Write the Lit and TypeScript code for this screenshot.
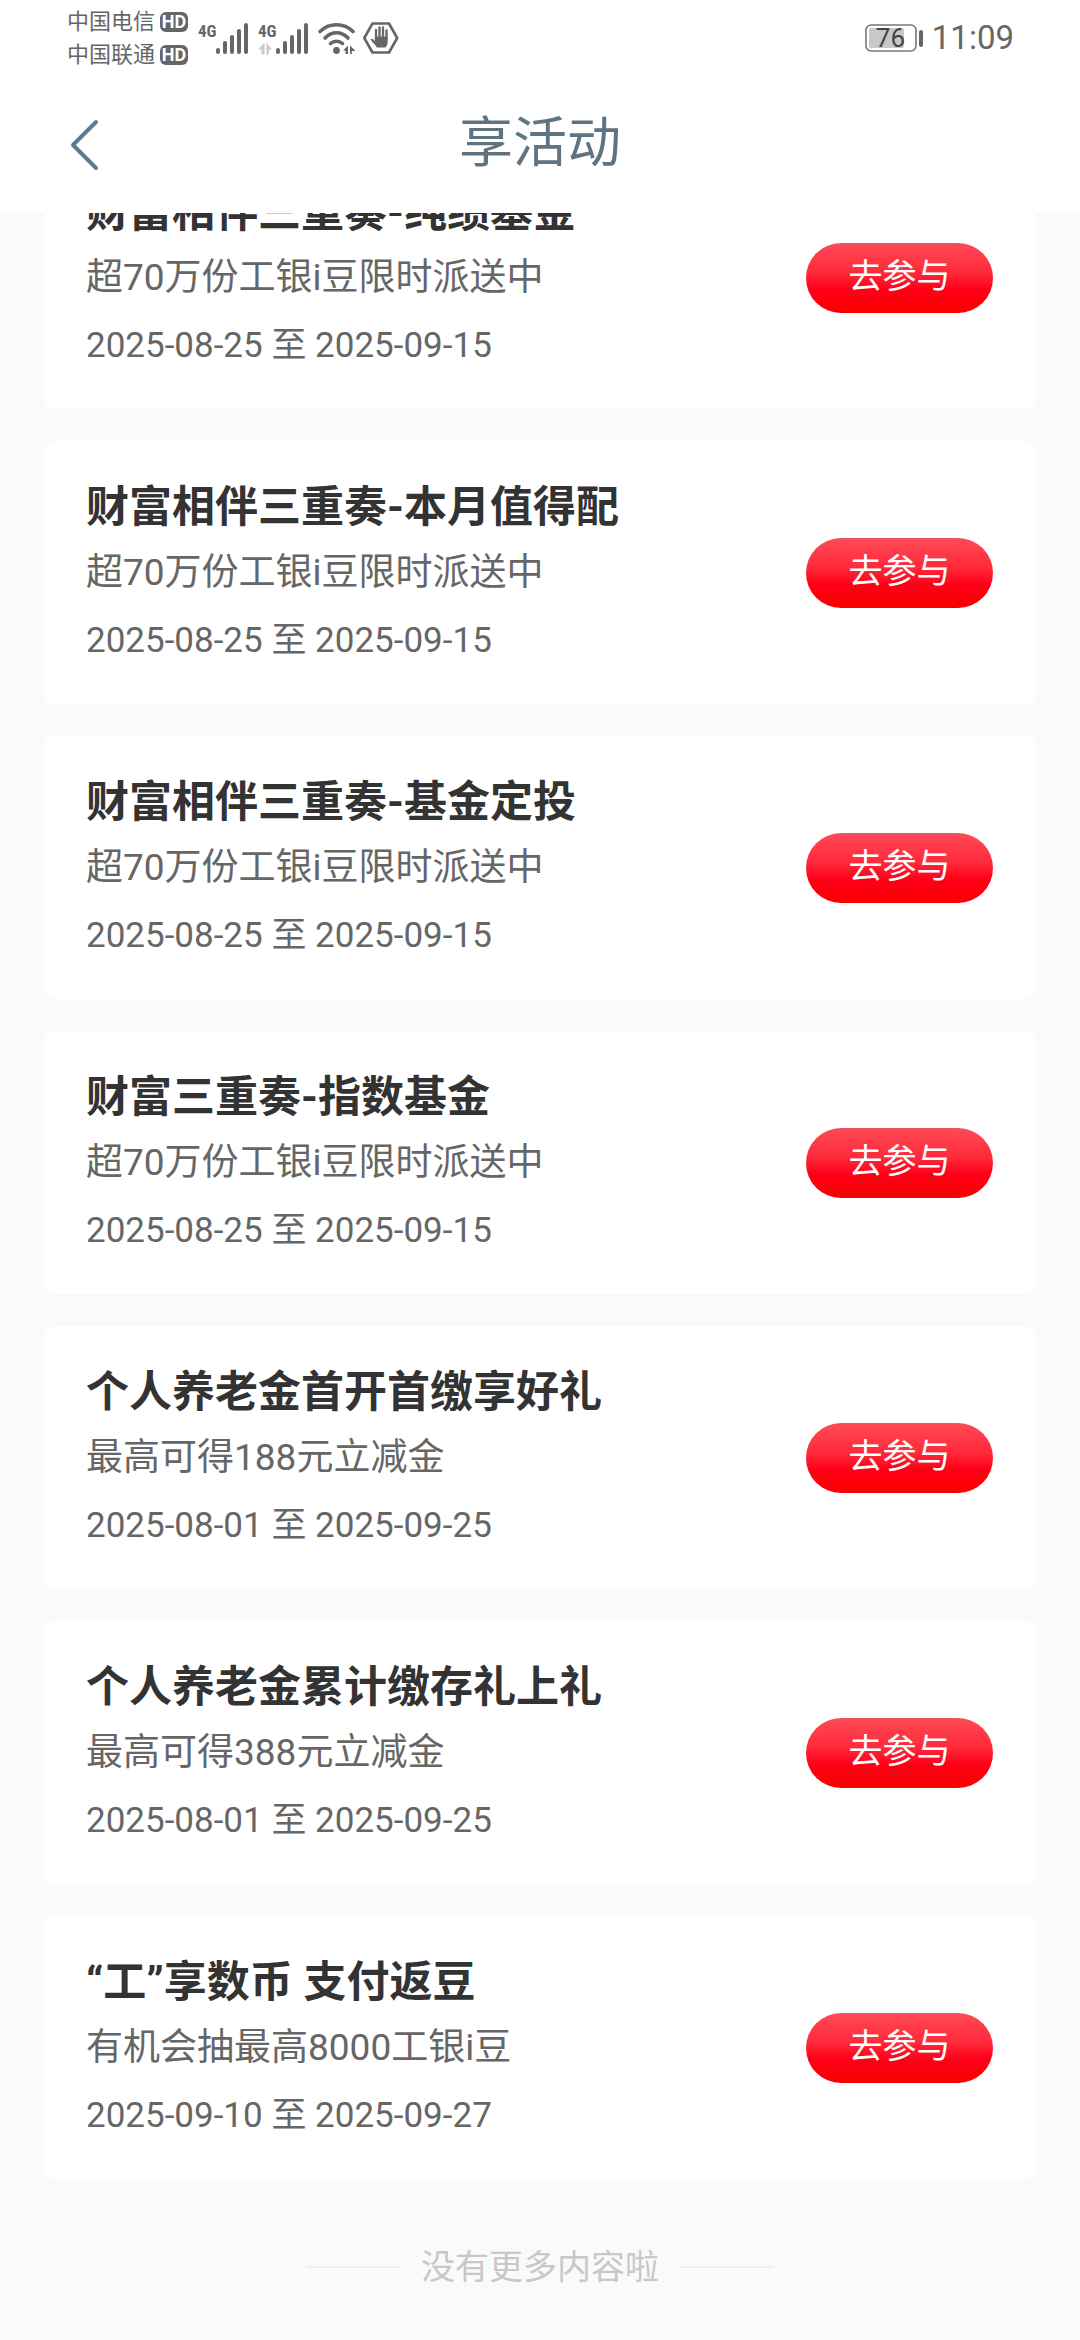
import { LitElement, html, css, svg } from "lit";
import { customElement, property } from "lit/decorators.js";

interface Activity {
  title: string;
  summary: string;
  from: string;
  to: string;
}

const ACTIVITIES: Activity[] = [
  { title: "财富相伴三重奏-纯绩基金", summary: "超70万份工银i豆限时派送中", from: "2025-08-25", to: "2025-09-15" },
  { title: "财富相伴三重奏-本月值得配", summary: "超70万份工银i豆限时派送中", from: "2025-08-25", to: "2025-09-15" },
  { title: "财富相伴三重奏-基金定投", summary: "超70万份工银i豆限时派送中", from: "2025-08-25", to: "2025-09-15" },
  { title: "财富三重奏-指数基金", summary: "超70万份工银i豆限时派送中", from: "2025-08-25", to: "2025-09-15" },
  { title: "个人养老金首开首缴享好礼", summary: "最高可得188元立减金", from: "2025-08-01", to: "2025-09-25" },
  { title: "个人养老金累计缴存礼上礼", summary: "最高可得388元立减金", from: "2025-08-01", to: "2025-09-25" },
  { title: "“工”享数币 支付返豆", summary: "有机会抽最高8000工银i豆", from: "2025-09-10", to: "2025-09-27" },
];

@customElement("status-bar")
class StatusBar extends LitElement {
  static styles = css`
    :host {
      display: flex;
      align-items: center;
      justify-content: space-between;
      height: 76px;
      padding: 0 66px 0 67px;
      color: #666;
    }
    .group {
      display: flex;
      align-items: center;
    }
    .carrier {
      display: flex;
      align-items: center;
      gap: 5px;
      height: 33px;
      font-size: 22px;
      line-height: 33px;
    }
    .hd {
      width: 28px;
      border-radius: 6px;
      background: #666;
      color: #fff;
      font-size: 18px;
      font-weight: 700;
      line-height: 20px;
      text-align: center;
    }
    svg {
      display: block;
      flex: none;
      overflow: visible;
    }
    .signals {
      gap: 7px;
      margin-left: 10px;
    }
    .net {
      font: 700 17px "Liberation Sans Narrow", "Roboto Condensed", Roboto, sans-serif;
      fill: #666;
    }
    .battery {
      display: grid;
      align-items: center;
    }
    .battery svg,
    .level {
      grid-area: 1 / 1;
    }
    .level {
      padding-left: 11px;
      color: #444;
      font-size: 26px;
      line-height: 40px;
    }
    .right {
      gap: 8px;
    }
    .time {
      font-size: 33px;
      line-height: 40px;
    }
  `;

  private signal(data: boolean) {
    return html`<svg width="53" height="34" viewBox="0 0 53 34" fill="#666" aria-hidden="true">
      <text class="net" x="0" y="16">4G</text>
      ${data
        ? svg`<path d="M6.500 21.500v12h-3v-5h-3.500zM8.500 21.500v12h2.500v-5h3z" fill="#ccc" />`
        : null}
      <rect x="18" y="27" width="4" height="6" rx="2" />
      <rect x="25" y="20" width="4" height="13" rx="2" />
      <rect x="32" y="14" width="4" height="19" rx="2" />
      <rect x="39" y="8" width="4" height="25" rx="2" />
      <rect x="46" y="2" width="4" height="31" rx="2" />
    </svg>`;
  }

  render() {
    return html`
      <div class="group">
        <div>
          <div class="carrier">中国电信<span class="hd">HD</span></div>
          <div class="carrier">中国联通<span class="hd">HD</span></div>
        </div>
        <div class="group signals">
          ${this.signal(false)} ${this.signal(true)}
          <svg width="38" height="34" viewBox="0 0 38 34" fill="none" aria-hidden="true">
            <g stroke="#666" stroke-width="3.600" stroke-linecap="round">
              <path d="M2 10.500C11 1.500 26 1.500 35 10.500" />
              <path d="M7 17C13.500 10 23.500 10 30 17" />
              <path d="M12.500 22.500C16 19.500 21 19.500 24.500 22.500" />
            </g>
            <circle cx="18.500" cy="29.500" r="3.400" fill="#666" />
            <path d="M30 24.500v8.500h-2.500v-3.500h-2.500zM32 24.500v8.500h1.800v-3h3.700z" fill="#666" />
          </svg>
          <svg width="36" height="34" viewBox="0 0 36 34" fill="none" aria-hidden="true">
            <path d="M9.500 2.500h16.500l8.200 14.500-8.200 14.500h-16.500l-8.200-14.500z" stroke="#666" stroke-width="2.600" stroke-linejoin="round" />
            <path d="M13 18v-9M16.500 17v-10.500M20 17v-10.500M23.500 18v-8.500" stroke="#666" stroke-width="2.300" stroke-linecap="round" />
            <path d="M11.900 15.500h12.800v6.500c0 2-1.500 3-2.200 4.500h-8.500c-1-2-5.500-6-6.500-8 .6-1.300 2-1 3 0l1.400 1.400z" fill="#666" />
          </svg>
        </div>
      </div>
      <div class="group right">
        <div class="battery">
          <svg width="59" height="30" viewBox="0 0 59 30" aria-hidden="true">
            <rect x="1" y="2" width="50" height="26" rx="5" fill="none" stroke="#777" stroke-width="1.600" />
            <rect x="4" y="5" width="35" height="20" rx="2" fill="#c8c8c8" />
            <rect x="54" y="7" width="4" height="17" rx="2" fill="#666" />
          </svg>
          <span class="level">76</span>
        </div>
        <span class="time">11:09</span>
      </div>
    `;
  }
}

@customElement("activity-card")
class ActivityCard extends LitElement {
  @property({ attribute: false }) activity!: Activity;

  static styles = css`
    :host {
      display: block;
    }
    .card {
      display: flex;
      align-items: center;
      justify-content: space-between;
      gap: 24px;
      padding: 0 43px 0 42px;
      border-radius: 12px;
      background: #fff;
    }
    .text {
      padding: 34px 0 29px;
    }
    h2,
    p {
      margin: 0;
    }
    .title {
      color: #333;
      font-size: 43px;
      font-weight: 700;
      line-height: 64px;
    }
    .summary,
    .dates {
      color: #666;
      font-size: 37px;
      line-height: 68px;
    }
    .dates {
      font-size: 35px;
    }
    .join {
      flex: none;
      width: 187px;
      height: 70px;
      padding: 0 0 4px;
      border: 0;
      border-radius: 35px;
      background: linear-gradient(#e85560 0, #ff4753 4%, #ff2a3b 42%, #ff0018 66%, #f80000 100%);
      color: #fff;
      font: inherit;
      font-size: 34px;
      line-height: 64px;
      cursor: pointer;
    }
  `;

  render() {
    const a = this.activity;
    return html`<article class="card">
      <div class="text">
        <h2 class="title">${a.title}</h2>
        <p class="summary">${a.summary}</p>
        <p class="dates">${a.from} 至 ${a.to}</p>
      </div>
      <button class="join" type="button">去参与</button>
    </article>`;
  }
}

@customElement("app-root")
class AppRoot extends LitElement {
  static styles = css`
    :host {
      display: block;
      min-height: 100vh;
      background: #fafafa;
      font-family: Roboto, "Noto Sans CJK SC", sans-serif;
    }
    .top {
      position: sticky;
      top: 0;
      z-index: 1;
      background: #fff;
    }
    .nav {
      display: grid;
      grid-template-columns: 120px 1fr 120px;
      align-items: center;
      height: 137px;
    }
    .back {
      display: flex;
      align-items: center;
      height: 100%;
      padding: 0 0 0 68px;
      border: 0;
      background: none;
      cursor: pointer;
    }
    .heading {
      margin: 0;
      padding-bottom: 2px;
      color: #5f7380;
      font-size: 54px;
      font-weight: 400;
      line-height: 80px;
      text-align: center;
    }
    .list {
      display: grid;
      gap: 32px;
      margin-top: -67px;
      padding: 0 44px;
    }
    .end {
      display: flex;
      align-items: center;
      justify-content: center;
      gap: 20px;
      padding: 54px 0 48px;
      color: #c8c8c8;
      font-size: 34px;
      line-height: 68px;
    }
    .rule {
      width: 95px;
      height: 2px;
      background: #eee;
    }
  `;

  render() {
    return html`
      <header class="top">
        <status-bar></status-bar>
        <nav class="nav">
          <button class="back" type="button" aria-label="返回">
            <svg width="32" height="52" viewBox="0 0 32 52" fill="none" stroke="#5f7c8c" stroke-width="4" stroke-linecap="round" stroke-linejoin="round">
              <path d="M28 3L5 26L28 49" />
            </svg>
          </button>
          <h1 class="heading">享活动</h1>
        </nav>
      </header>
      <main>
        <div class="list">${ACTIVITIES.map((a) => html`<activity-card .activity=${a}></activity-card>`)}</div>
        <div class="end"><span class="rule"></span><span>没有更多内容啦</span><span class="rule"></span></div>
      </main>
    `;
  }
}
